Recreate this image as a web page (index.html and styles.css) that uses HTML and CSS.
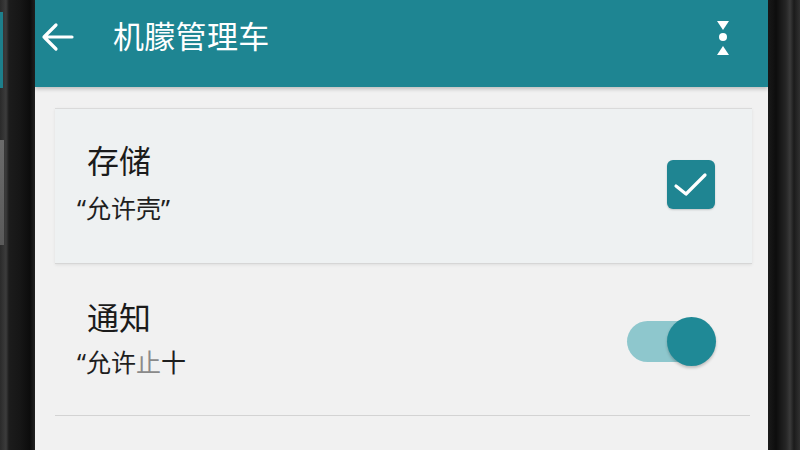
FILE: index.html
```html
<!DOCTYPE html>
<html lang="zh-CN">
<head>
<meta charset="utf-8">
<link rel="stylesheet" href="styles.css">
</head>
<body>
<div class="device">
  <div class="bezel bezel-left"></div>
  <div class="screen">
    <header class="appbar">
      <svg class="back" width="34" height="30" viewBox="0 0 34 30"><path d="M32 15H4M16 3L4 15l12 12" fill="none" stroke="#fff" stroke-width="3.2" stroke-linecap="round" stroke-linejoin="round"/></svg>
      <h1 class="title">机朦管理车</h1>
      <svg class="menu" width="14" height="36" viewBox="0 0 14 36"><path d="M1 0h12L7 9z" fill="#fff"/><circle cx="7" cy="16" r="4" fill="#fff"/><path d="M1 34h12L7 25z" fill="#fff"/></svg>
    </header>
    <main class="content">
      <section class="card row">
        <div class="texts">
          <div class="label">存储</div>
          <div class="sub">“允许壳”</div>
        </div>
        <div class="checkbox">
          <svg width="48" height="48" viewBox="0 0 48 48"><path d="M9 26l10 8 19-19" fill="none" stroke="#fff" stroke-width="3.2" stroke-linecap="round" stroke-linejoin="round"/></svg>
        </div>
      </section>
      <section class="plain row">
        <div class="texts">
          <div class="label">通知</div>
          <div class="sub sub2">“允许<span class="faded">止</span>十</div>
        </div>
        <div class="toggle"><div class="track"></div><div class="thumb"></div></div>
      </section>
    </main>
  </div>
  <div class="bezel bezel-right"></div>
</div>
</body>
</html>
```
FILE: styles.css
```css
html, body {
  margin: 0;
  padding: 0;
  width: 800px;
  height: 450px;
  overflow: hidden;
  font-family: "Noto Sans", "Noto Sans CJK SC", sans-serif;
}
.device {
  display: flex;
  width: 800px;
  height: 450px;
  background: #111;
}
.bezel-left {
  width: 35px;
  flex: none;
  background:
    linear-gradient(180deg, transparent 12px, #1d7f8b 12px, #1d7f8b 88px, transparent 88px) 0 0 / 3px 100% no-repeat,
    linear-gradient(180deg, transparent 140px, #6b6b6b 140px, #5a5a5a 245px, transparent 245px) 0 0 / 4px 100% no-repeat,
    linear-gradient(90deg, #2a2a2a 0, #3c3c3c 6px, #1c1c1c 9px, #161616 20px, #0c0c0c 30px, #222 35px);
}
.bezel-right {
  width: 32px;
  flex: none;
  background: linear-gradient(90deg, #1a1a1a 0, #0d0d0d 8px, #262626 18px, #3a3a3a 22px, #1b1b1b 26px, #303030 32px);
}
.screen {
  width: 733px;
  flex: none;
  background: #f1f1f1;
  display: flex;
  flex-direction: column;
}
.appbar {
  height: 87px;
  flex: none;
  background: #1e8592;
  display: flex;
  align-items: flex-start;
  padding: 0 38px 0 5px;
  box-shadow: 0 2px 4px rgba(0,0,0,0.22);
  position: relative;
  z-index: 1;
}
.back {
  margin-top: 22px;
  flex: none;
}
.title {
  margin: 15px 0 0 39px;
  font-family: "Noto Sans CJK SC", sans-serif;
  font-size: 31px;
  line-height: 40px;
  font-weight: 400;
  color: #fff;
  letter-spacing: 0.3px;
  flex: 1;
}
.menu {
  margin-top: 21px;
  flex: none;
}
.content {
  padding: 21px 16px 0 20px;
}
.row {
  display: flex;
  align-items: center;
}
.card {
  background: #eef1f2;
  border-top: 1px solid #dadada;
  border-bottom: 1px solid #d6d6d6;
  box-shadow: 0 1px 3px rgba(0,0,0,0.08);
  padding: 30px 37px 40px 32px;
}
.texts {
  flex: 1;
}
.label {
  font-family: "Noto Sans CJK SC", sans-serif;
  font-size: 32px;
  line-height: 40px;
  color: #1b1b1b;
}
.sub {
  margin: 14px 0 0 -10px;
  font-size: 25px;
  line-height: 30px;
  color: #1f1f1f;
}
.sub2 {
  margin-top: 11px;
}
.faded {
  color: #8a8a8a;
}
.checkbox {
  width: 48px;
  height: 49px;
  margin-top: 6px;
  border-radius: 6px;
  background: #1f8592;
  box-shadow: 0 1px 2px rgba(0,0,0,0.18);
  display: flex;
  align-items: center;
  justify-content: center;
}
.plain {
  padding: 32px 34px 38px 32px;
  border-bottom: 1px solid #d3d3d3;
  margin-right: 2px;
}
.toggle {
  width: 89px;
  height: 50px;
  margin-top: 10px;
  display: flex;
  align-items: center;
  position: relative;
}
.track {
  width: 80px;
  height: 41px;
  border-radius: 21px;
  background: #8ec7cd;
}
.thumb {
  position: absolute;
  right: 0;
  top: 0;
  width: 49px;
  height: 49px;
  border-radius: 50%;
  background: #1f8996;
  box-shadow: 0 2px 3px rgba(0,0,0,0.22);
}
```
